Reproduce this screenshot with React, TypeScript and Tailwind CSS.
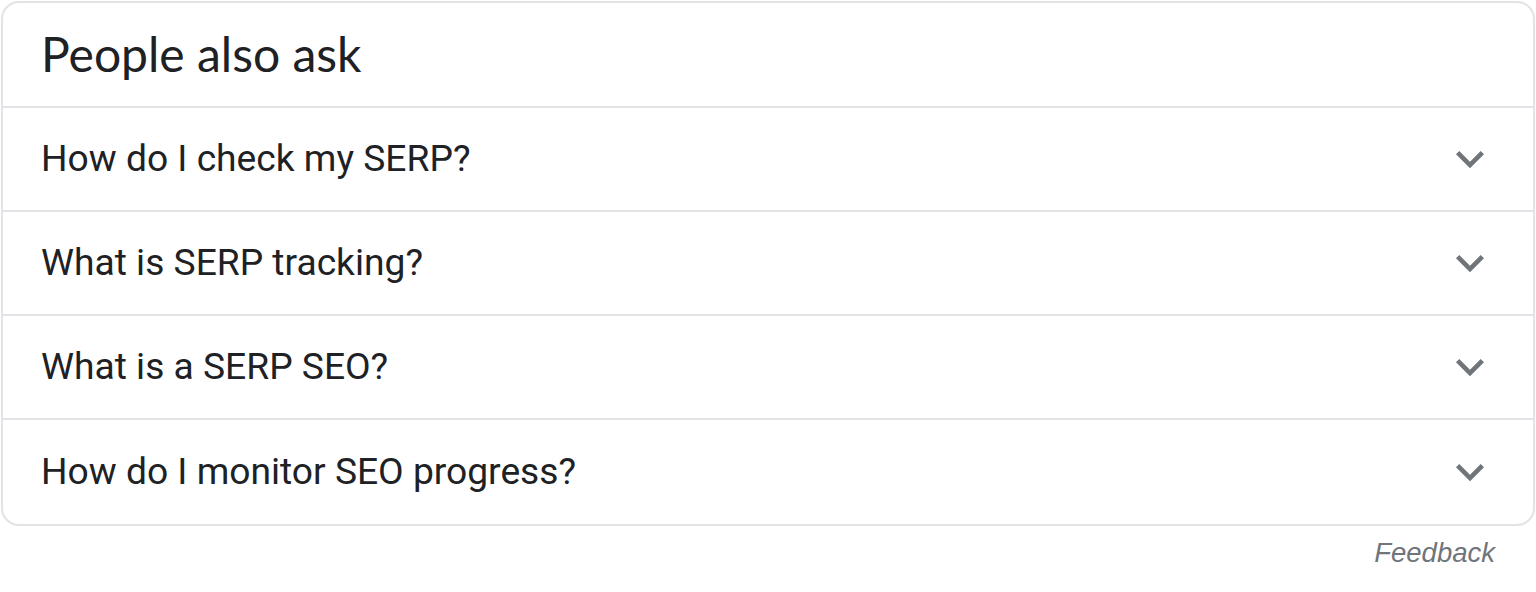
const questions = [
  "How do I check my SERP?",
  "What is SERP tracking?",
  "What is a SERP SEO?",
  "How do I monitor SEO progress?",
]

function Chevron() {
  return (
    <svg viewBox="0 0 24 24" className="w-[56px] h-[56px] fill-[#70757a]">
      <path d="M16.59 8.59L12 13.17 7.41 8.59 6 10l6 6 6-6z" />
    </svg>
  )
}

export default function App() {
  return (
    <div className="w-[1536px] h-[592px] bg-white pt-[1px] px-[1px]">
      <div className="border-2 border-[#e2e3e6] rounded-[18px] overflow-hidden">
        <div className="h-[105px] flex items-center px-[38px] border-b-2 border-[#e2e3e6]">
          <h2 className="text-[#202124] text-[48px] leading-none -mt-[2px]" style={{ fontFamily: "Lato, sans-serif" }}>
            People also ask
          </h2>
        </div>
        {questions.map((q, i) => (
          <div
            key={q}
            className={`h-[104px] flex items-center justify-between pl-[38px] pr-[35px] ${i < questions.length - 1 ? "border-b-2 border-[#e2e3e6]" : ""}`}
          >
            <span className="text-[#202124] text-[37.2px] leading-none" style={{ fontFamily: "Roboto, sans-serif" }}>
              {q}
            </span>
            <Chevron />
          </div>
        ))}
      </div>
      <div className="flex justify-end pr-[40px] pt-[6px]">
        <span className="italic text-[#70757a] text-[27.5px]" style={{ fontFamily: '"Liberation Sans", Arial, sans-serif' }}>
          Feedback
        </span>
      </div>
    </div>
  )
}
